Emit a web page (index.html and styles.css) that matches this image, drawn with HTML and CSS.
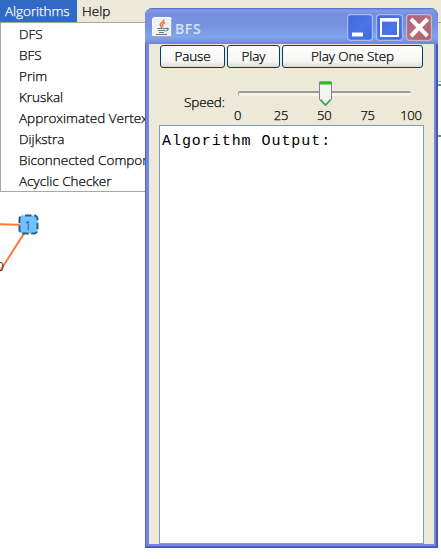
FILE: index.html
```
<!DOCTYPE html>
<html lang="en">
<head>
<meta charset="utf-8">
<title>BFS</title>
<link rel="stylesheet" href="styles.css">
</head>
<body>
<nav class="menubar"><span class="menu active">Algorithms</span><span class="menu">Help</span></nav>
<main class="workspace">
  <svg class="graph" width="60" height="80" viewBox="0 200 60 80">
    <path d="M0 224.2L20 224.8M0 271L25 232" stroke="#ff7837" stroke-width="2" fill="none"/>
    <rect x="19.5" y="215.5" width="18" height="18" rx="3.5" fill="#70c2ff" stroke="#315d7d" stroke-width="2" stroke-dasharray="6.5 2.5" stroke-dashoffset="-2"/>
    <text x="24.5" y="230" class="node-label">1</text>
    <text x="-3" y="271" class="edge-label">0</text>
  </svg>
  <ul class="dropdown">
    <li>DFS</li><li>BFS</li><li>Prim</li><li>Kruskal</li><li>Approximated Vertex</li><li>Dijkstra</li><li>Biconnected Component</li><li>Acyclic Checker</li>
  </ul>
  <div class="backdrop"><div class="toolbar-edge"></div><div class="field-edge"></div></div>
</main>
<section class="window">
  <header class="titlebar">
    <svg class="java" width="20" height="20" viewBox="0 0 20 20">
      <rect x=".5" y=".5" width="19" height="19" rx="2" fill="#eef0f2" stroke="#fff"/>
      <path d="M1 19.5H19M19.5 2V19" stroke="#a6a8b0"/>
      <path d="M11.5 2.5C13 5 7 6 8.5 8.5L10 11M13 5.5C9.5 7 10.5 8 11 9.5" fill="none" stroke="#e87538" stroke-width="1.5"/>
      <path d="M5 11.5H14M6 13.5H13M7 15.5H12M14 11.5C17 10.5 17 13.5 13.5 14M4 17.5H15" fill="none" stroke="#607c98" stroke-width="1.2"/>
    </svg>
    <h1>BFS</h1>
    <div class="controls">
      <svg width="26" height="27" viewBox="0 0 26 27"><rect x=".6" y=".6" width="24.8" height="25.8" rx="3" fill="url(#blue)" stroke="#a9b9ee" stroke-width="1.2"/><path d="M5 20.5H16" stroke="#fff" stroke-width="4"/>
        <defs><linearGradient id="blue" x2="1" y2="1"><stop stop-color="#4167d7"/><stop offset=".55" stop-color="#4a75e8"/><stop offset="1" stop-color="#3f69de"/></linearGradient><linearGradient id="red" x2="1" y2="1"><stop stop-color="#a95e78"/><stop offset=".5" stop-color="#b96f7c"/><stop offset="1" stop-color="#a75670"/></linearGradient></defs></svg>
      <svg width="27" height="27" viewBox="0 0 27 27"><rect x=".6" y=".6" width="25.8" height="25.8" rx="3" fill="url(#blue)" stroke="#a9b9ee" stroke-width="1.2"/><path d="M4 5.8H23" stroke="#fff" stroke-width="3.6"/><path d="M5 6V22H22V6" fill="none" stroke="#fff" stroke-width="2"/></svg>
      <svg width="26" height="27" viewBox="0 0 26 27"><rect x=".6" y=".6" width="24.8" height="25.8" rx="3" fill="url(#red)" stroke="#cbb0cf" stroke-width="1.2"/><path d="M5 5L21.5 22M21.5 5L5 22" stroke="#fff" stroke-width="4"/></svg>
    </div>
  </header>
  <div class="content">
    <div class="buttons"><button class="pause">Pause</button><button class="play">Play</button><button class="step">Play One Step</button></div>
    <div class="speed">
      <span class="speed-label">Speed:</span>
      <div class="slider">
        <div class="rail"></div>
        <div class="ticks"><span>0</span><span>25</span><span>50</span><span>75</span><span>100</span></div>
        <svg class="thumb" width="13" height="26" viewBox="0 0 13 26"><path d="M.5 1H12.5V18.5L6.5 25L.5 18.5Z" fill="#f3f3ef" stroke="#778892"/><path d="M1 2H12" stroke="#21bd21" stroke-width="3"/><path d="M1.5 18.5L6.5 24L11.5 18.5" fill="none" stroke="#35a94a" stroke-width="1.5"/></svg>
      </div>
    </div>
    <div class="output"><span>Algorithm Output:</span></div>
  </div>
</section>
</body>
</html>
```
FILE: styles.css
```
* { box-sizing: border-box; }
body { margin: 0; width: 441px; height: 559px; overflow: hidden; position: relative; background: #fff; color: #000; font: 300 13.5px/21px "Open Sans", "Noto Sans", sans-serif; -webkit-text-stroke: .25px; }
.menubar { display: flex; height: 22px; background: #ece9d8; }
.menu { padding: 0 5px; line-height: 22px; }
.menu.active { width: 77px; background: #316ac5; color: #fff; letter-spacing: -.05px; }
.workspace { height: 537px; display: flex; justify-content: space-between; align-items: flex-start; position: relative; }
.graph { position: absolute; left: 0; top: 178px; }
.node-label { font-size: 12px; font-weight: 400; fill: #315d7d; stroke: none; }
.edge-label { font-size: 12px; font-weight: 400; fill: #602d15; stroke: none; }
.dropdown { list-style: none; margin: 0; padding: 1px 0 0 18px; width: 180px; height: 170px; border: 1px solid #aca899; background: #fff; white-space: nowrap; }
.dropdown li { height: 21px; line-height: 21px; letter-spacing: 0; }
.backdrop { width: 20px; }
.toolbar-edge { height: 60px; background: #ece9d8; border-top: 1px solid #aca899; border-bottom: 1px solid #aca899; }
.field-edge { height: 53px; margin-top: 2px; border: solid #668cac; border-width: 2px 0; }
.window { position: absolute; left: 145px; top: 8px; width: 293px; height: 540px; padding: 0 4px 4px; border-radius: 8px 8px 0 0; background: #7388dc; box-shadow: inset 1px 0 #5360c8, inset -2px -1px #4c54b6, inset 0 -2px #5360bd; }
.titlebar { height: 36px; margin: 0 -4px; padding: 6px 6px 0 7px; display: flex; border-radius: 8px 8px 0 0; background: linear-gradient(#5069cd 0, #819be8 2px, #7590df 6px, #7793df 18px, #82a4eb 29px, #7895e2 33px, #6d84d8 36px); }
.java { margin-top: 3px; }
h1 { margin: 4px 0 0 3px; font: 600 14px/21px "Open Sans", "Noto Sans", sans-serif; color: #d8e4fc; letter-spacing: .6px; -webkit-text-stroke: 0; }
.controls { display: flex; gap: 3px; margin-left: auto; }
.content { width: 285px; height: 500px; padding: 1px 10px 0; background: #ece9d8; }
.buttons { display: flex; gap: 2px; margin-left: 1px; }
button { height: 23px; padding: 0; border: 1px solid #003c74; border-radius: 3px; background: linear-gradient(#fff, #f5f5f1 75%, #dcd8cf); color: #000; font: 300 13.5px/19px "Open Sans", "Noto Sans", sans-serif; letter-spacing: -.1px; -webkit-text-stroke: .25px; }
.pause { width: 65px; } .play { width: 53px; } .step { width: 141px; }
.speed { display: flex; height: 57px; }
.speed-label { width: 74px; padding: 24px 0 0 25px; letter-spacing: -.1px; }
.slider { position: relative; width: 182px; padding-top: 23px; }
.rail { width: 173px; height: 5px; margin-left: 5px; border: 1px solid #9d9c99; border-width: 2px 0 0 1px; border-radius: 2px; background: #f4f3ee; }
.ticks { display: grid; grid-template-columns: repeat(5, 43.3px); margin: 9px 0 0 -17px; text-align: center; font-size: 13px; line-height: 21px; letter-spacing: -.3px; }
.thumb { position: absolute; left: 86px; top: 13px; }
.output { width: 265px; height: 419px; border: 1px solid #7f9db9; background: #fff; padding: 6px 2px; font: 15px/20px "Liberation Mono", monospace; letter-spacing: .95px; -webkit-text-stroke: 0; }
```
